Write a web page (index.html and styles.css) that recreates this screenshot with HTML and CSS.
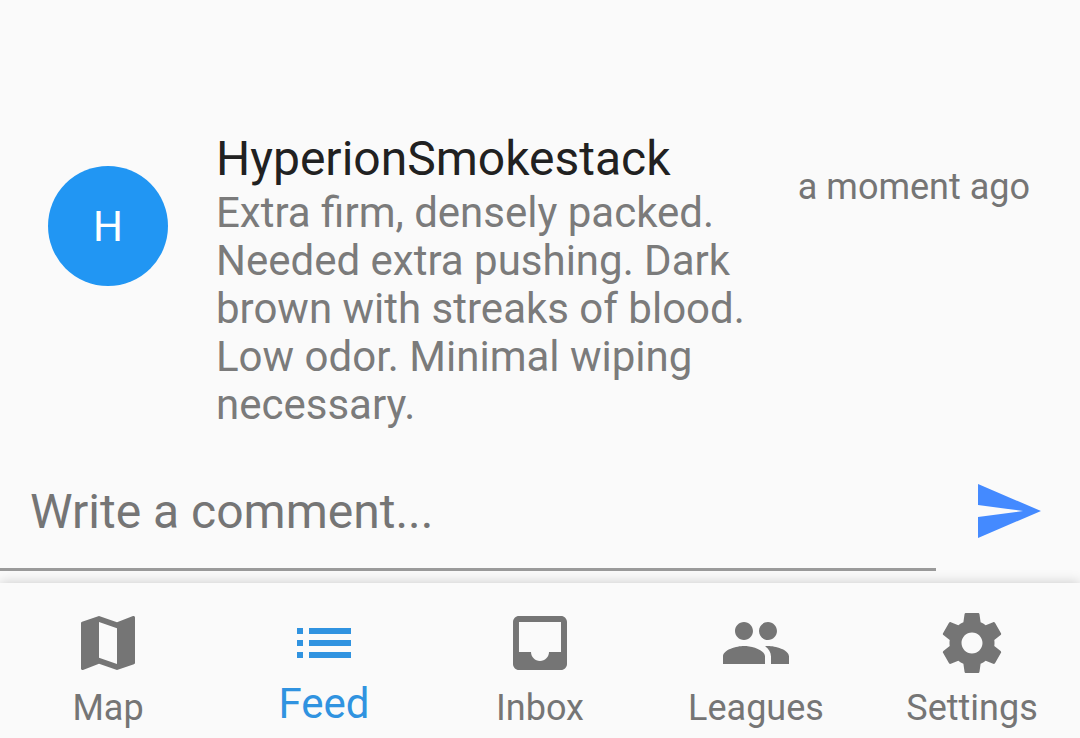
FILE: index.html
```
<!DOCTYPE html>
<html lang="en">
<head>
<meta charset="utf-8">
<meta name="viewport" content="width=device-width, initial-scale=1">
<title>Feed</title>
<link rel="stylesheet" href="styles.css">
</head>
<body>
<main class="feed">
  <article class="comment">
    <div class="avatar">H</div>
    <div class="body">
      <h1 class="author">HyperionSmokestack</h1>
      <p class="message">Extra firm, densely packed. Needed extra pushing. Dark brown with streaks of blood. Low odor. Minimal wiping necessary.</p>
    </div>
    <time class="time">a moment ago</time>
  </article>
</main>
<form class="composer">
  <input class="field" type="text" aria-label="Write a comment" placeholder="Write a comment...">
  <button class="send" type="button" aria-label="Send">
    <svg class="icon" viewBox="0 0 24 24"><path d="M2.01 21L23 12 2.01 3 2 10l15 2-15 2z"/></svg>
  </button>
</form>
<nav class="tabs">
  <a class="tab" href="#map">
    <svg class="icon" viewBox="0 0 24 24"><path d="M20.5 3l-.16.03L15 5.1 9 3 3.36 4.9c-.21.07-.36.25-.36.48V20.500c0 .28.22.5.5.5l.16-.03L9 18.900l6 2.100 5.640-1.900c.21-.07.36-.25.36-.48V3.500c0-.28-.22-.5-.5-.5zM15 19l-6-2.110V5l6 2.110V19z"/></svg>
    <span class="label">Map</span>
  </a>
  <a class="tab active" href="#feed" aria-current="page">
    <svg class="icon" viewBox="0 0 24 24"><path d="M3 13h2v-2H3v2zm0 4h2v-2H3v2zm0-8h2V7H3v2zm4 4h14v-2H7v2zm0 4h14v-2H7v2zM7 7v2h14V7H7z"/></svg>
    <span class="label">Feed</span>
  </a>
  <a class="tab" href="#inbox">
    <svg class="icon" viewBox="0 0 24 24"><path d="M19 3H4.990c-1.110 0-1.980.89-1.980 2L3 19c0 1.100.88 2 1.990 2H19c1.100 0 2-.9 2-2V5c0-1.110-.9-2-2-2zm0 12h-4c0 1.660-1.350 3-3 3s-3-1.340-3-3H4.990V5H19v10z"/></svg>
    <span class="label">Inbox</span>
  </a>
  <a class="tab" href="#leagues">
    <svg class="icon" viewBox="0 0 24 24"><path d="M16 11c1.660 0 2.990-1.340 2.990-3S17.660 5 16 5s-3 1.340-3 3 1.340 3 3 3zm-8 0c1.660 0 2.990-1.340 2.990-3S9.660 5 8 5 5 6.340 5 8s1.340 3 3 3zm0 2c-2.330 0-7 1.170-7 3.500V19h14v-2.500c0-2.330-4.670-3.500-7-3.500zm8 0c-.29 0-.62.02-.97.05 1.160.84 1.970 1.970 1.970 3.450V19h6v-2.500c0-2.330-4.670-3.500-7-3.500z"/></svg>
    <span class="label">Leagues</span>
  </a>
  <a class="tab" href="#settings">
    <svg class="icon" viewBox="0 0 24 24"><path d="M19.430 12.980c.04-.32.07-.64.07-.98s-.03-.66-.07-.98l2.110-1.650c.19-.15.24-.42.12-.64l-2-3.460c-.12-.22-.39-.3-.61-.22l-2.490 1c-.52-.4-1.080-.73-1.690-.98l-.38-2.650C14.460 2.180 14.250 2 14 2h-4c-.25 0-.46.18-.49.42l-.38 2.650c-.61.25-1.170.59-1.690.98l-2.490-1c-.23-.09-.49 0-.61.22l-2 3.460c-.13.22-.07.49.12.64l2.110 1.650c-.04.32-.07.65-.07.98s.03.66.07.98l-2.110 1.650c-.19.15-.24.42-.12.64l2 3.460c.12.22.39.3.61.22l2.490-1c.52.4 1.080.73 1.690.98l.38 2.650c.03.24.24.42.49.42h4c.25 0 .46-.18.49-.42l.38-2.650c.61-.25 1.170-.59 1.690-.98l2.490 1c.23.09.49 0 .61-.22l2-3.460c.12-.22.07-.49-.12-.64l-2.110-1.650zM12 15.500c-1.930 0-3.500-1.570-3.500-3.500s1.570-3.500 3.500-3.500 3.500 1.570 3.500 3.500-1.570 3.500-3.500 3.500z"/></svg>
    <span class="label">Settings</span>
  </a>
</nav>
</body>
</html>
```
FILE: styles.css
```
* { box-sizing: border-box; }

body {
  margin: 0;
  min-height: 100vh;
  display: flex;
  flex-direction: column;
  background: #fafafa;
  color: #757575;
  font-family: Roboto, sans-serif;
}

.feed {
  flex: 1;
  display: flex;
  flex-direction: column;
  justify-content: flex-end;
  padding: 0 50px 22px 48px;
}

.comment {
  display: flex;
  align-items: flex-start;
}

.avatar {
  flex: none;
  display: grid;
  place-items: center;
  width: 120px;
  height: 120px;
  margin: 35px 48px 0 0;
  border-radius: 50%;
  background: #2196f3;
  color: #fff;
  font-size: 42px;
}

.body { flex: 1; }

.author {
  margin: 0 0 2px;
  color: #212121;
  font-size: 48px;
  font-weight: 400;
  line-height: 56px;
}

.message {
  margin: 0;
  color: #7b7b7b;
  font-size: 42px;
  line-height: 48px;
}

.time {
  flex: none;
  margin: 35px 0 0 48px;
  font-size: 36px;
  line-height: 42px;
}

.composer {
  display: flex;
  align-items: center;
}

.field {
  flex: 1;
  min-width: 0;
  height: 120px;
  padding: 4px 30px 0;
  border: 0;
  border-bottom: 3px solid #9a9a9a;
  outline: 0;
  background: transparent;
  color: #212121;
  font: 48px Roboto, sans-serif;
}

.field::placeholder {
  color: #757575;
  opacity: 1;
}

.send {
  display: grid;
  place-items: center;
  width: 144px;
  height: 120px;
  padding: 0;
  border: 0;
  background: none;
  color: #448aff;
}

.icon {
  display: block;
  width: 72px;
  height: 72px;
  fill: currentColor;
}

.tabs {
  display: flex;
  height: 155px;
  margin-top: 12px;
  background: #fafafa;
  box-shadow: 0 0 12px rgba(0, 0, 0, 0.2);
}

.tab {
  flex: 1;
  display: flex;
  flex-direction: column;
  align-items: center;
  padding-top: 24px;
  color: #757575;
  text-decoration: none;
}

.label {
  margin-top: 8px;
  font-size: 36px;
  line-height: 42px;
}

.active { color: #3093e0; }

.active .label {
  margin-top: 0;
  font-size: 42px;
  line-height: 50px;
}
```
